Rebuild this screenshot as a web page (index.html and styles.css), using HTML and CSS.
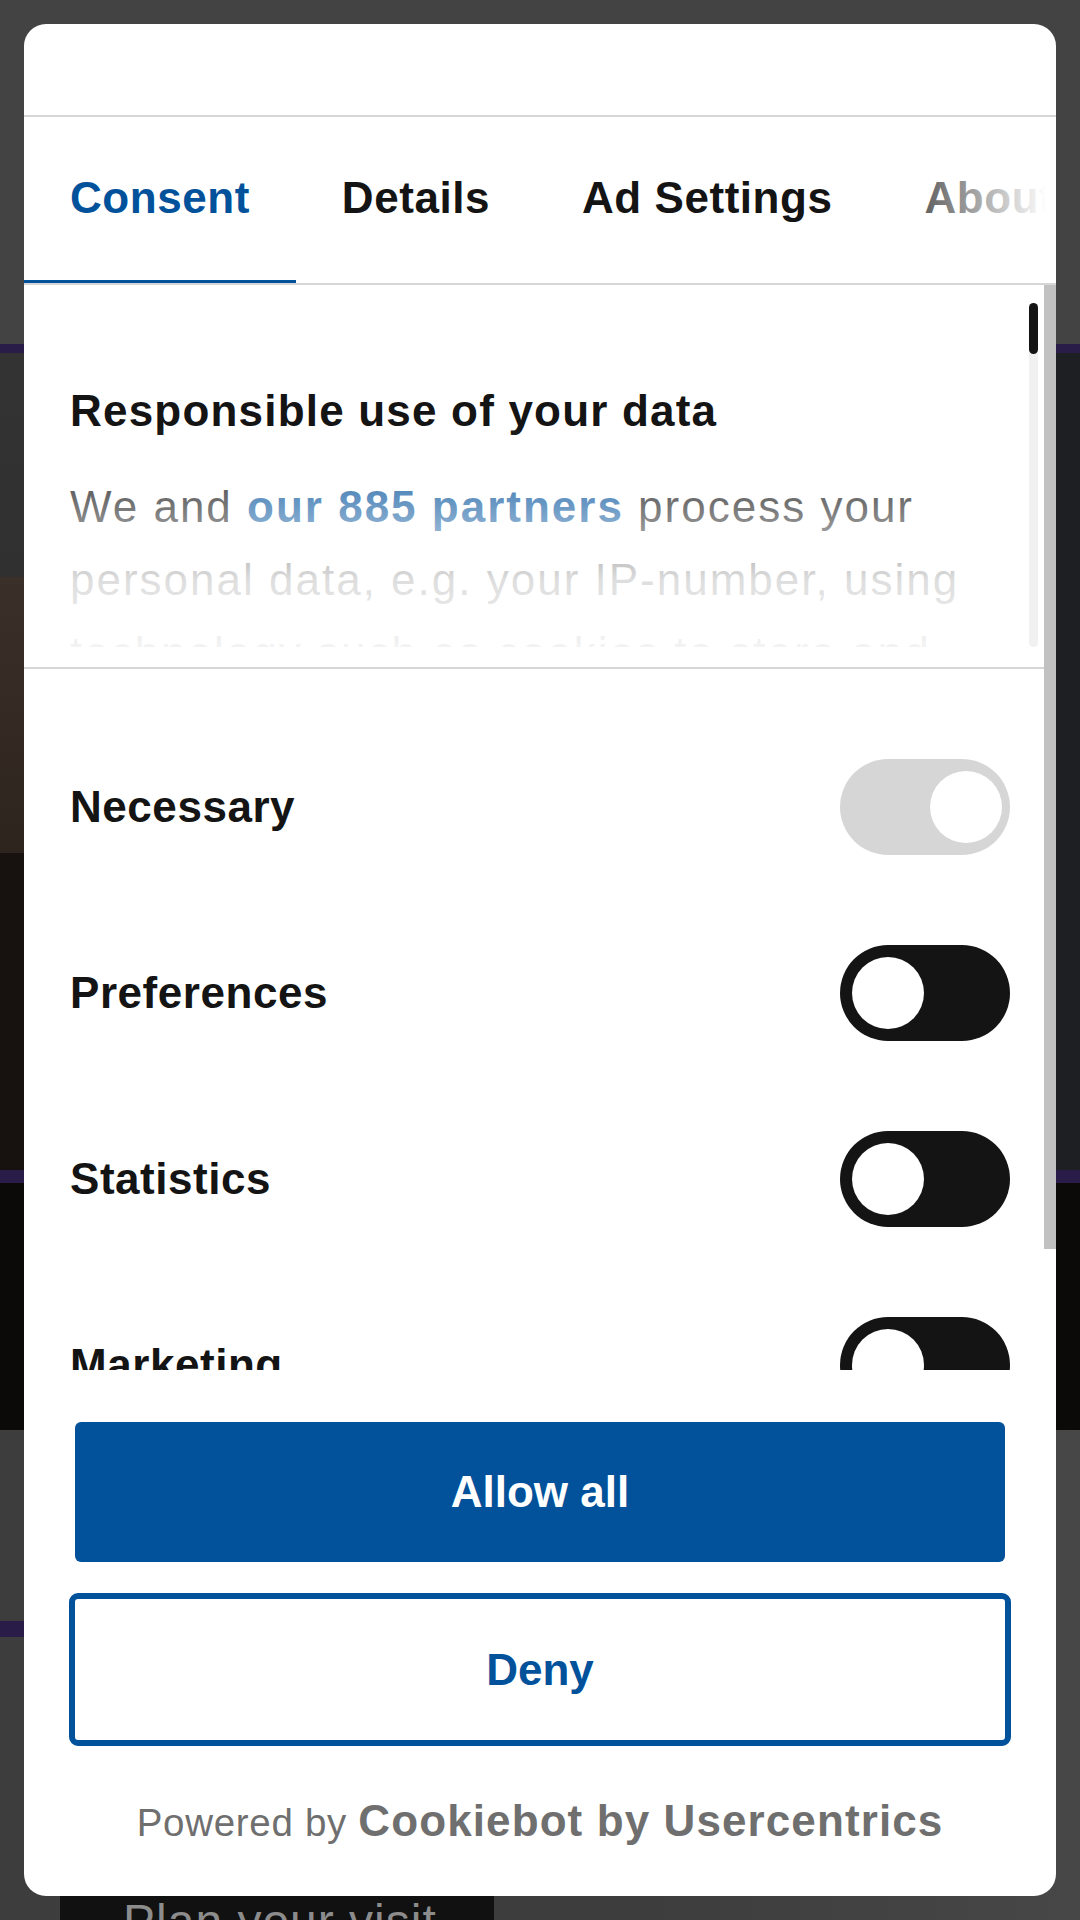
FILE: index.html
```html
<!DOCTYPE html>
<html>
<head>
    <link rel="stylesheet" href="styles.css">
</head>
<body>
    <div class="page">
        <div class="page-top"></div>
        <div class="stripe"></div>
        <div class="hero"><div class="hero-photo"></div></div>
        <div class="stripe thick"></div>
        <div class="band"></div>
        <div class="lower">
            <div class="accent"></div>
            <a class="visit">Plan your visit</a>
        </div>
    </div>

    <div class="dialog">
        <div class="dialog-header"></div>
        <nav class="tabs">
            <a class="tab active">Consent</a>
            <a class="tab">Details</a>
            <a class="tab">Ad Settings</a>
            <a class="tab">About</a>
        </nav>
        <div class="main">
            <section class="intro">
                <div class="intro-scroll">
                    <h2>Responsible use of your data</h2>
                    <p>We and <a>our 885 partners</a> process your personal data, e.g. your IP-number, using technology such as cookies to store and access information on your device.</p>
                </div>
                <div class="track"><div class="thumb"></div></div>
            </section>
            <section class="toggles">
                <div class="row"><span>Necessary</span><span class="switch on locked"></span></div>
                <div class="row"><span>Preferences</span><span class="switch"></span></div>
                <div class="row"><span>Statistics</span><span class="switch"></span></div>
                <div class="row"><span>Marketing</span><span class="switch"></span></div>
            </section>
            <div class="outer-thumb"></div>
        </div>
        <div class="footer">
            <button class="btn allow">Allow all</button>
            <button class="btn deny">Deny</button>
            <p class="powered">Powered by <b>Cookiebot by Usercentrics</b></p>
        </div>
    </div>
</body>
</html>
```

FILE: styles.css
```css
* { box-sizing: border-box; }
body { margin: 0; background-color: #434343; font-family: 'Liberation Sans', Arial, sans-serif; color: #141414; }
.page { height: 1920px; overflow: hidden; }
.page-top { height: 344px; background-color: #434343; }
.stripe { height: 9px; background-color: #2a1c48; }
.stripe.thick { height: 13px; }
.hero { height: 817px; background-color: #1e1f23; }
.hero-photo { width: 40%; height: 100%; background: linear-gradient(#333 0, #303030 224px, #3b3029 224px, #2e241e 500px, #17120f 500px); }
.band { height: 247px; background-color: #0b0a09; }
.lower { height: 490px; background: linear-gradient(90deg, #3d3d3d 60%, #474747); padding-top: 191px; }
.accent { width: 60px; height: 16px; background-color: #2a1c48; }
.visit { display: block; width: 434px; height: 120px; margin: 223px 0 0 60px; padding: 34px 0 0 63px; background-color: #111; color: #8c8c8c; font-size: 48px; letter-spacing: 1px; }

.dialog { position: absolute; top: 24px; left: 24px; width: 1032px; height: 1872px; background-color: #fff; border-radius: 22px; overflow: hidden; display: flex; flex-direction: column; }
.dialog-header { height: 93px; flex-shrink: 0; border-bottom: 2px solid #d6d6d6; }

.tabs { position: relative; display: flex; height: 168px; flex-shrink: 0; border-bottom: 2px solid #d6d6d6; overflow: hidden; }
.tabs::after { content: ''; position: absolute; top: 0; right: 0; bottom: 0; width: 192px; background: linear-gradient(90deg, rgba(255,255,255,0), #fff 95%); }
.tab { display: flex; align-items: center; flex-shrink: 0; padding: 0 46px 5px; font-size: 44px; font-weight: bold; letter-spacing: 0.55px; white-space: nowrap; color: #141414; }
.tab.active { color: #02519b; box-shadow: inset 0 -3px 0 #02519b; }

.main { position: relative; height: 1085px; flex-shrink: 0; overflow: hidden; }
.outer-thumb { position: absolute; top: -1px; right: 0; width: 12px; height: 965px; background-color: #c1c1c1; }

.intro { position: relative; height: 384px; padding-bottom: 20px; border-bottom: 2px solid #d6d6d6; }
.intro-scroll { position: relative; height: 362px; padding: 97px 46px 0; overflow: hidden; }
.intro-scroll::after { content: ''; position: absolute; left: 0; right: 0; bottom: 0; height: 220px; background: linear-gradient(rgba(255,255,255,0) 0, rgba(255,255,255,.42) 80px, rgba(255,255,255,.86) 153px, rgba(255,255,255,.95) 100%); }
.intro h2 { margin: 0 0 31px; font-size: 44px; line-height: 57px; letter-spacing: 1.2px; }
.intro p { margin: 0; font-size: 44px; line-height: 73px; letter-spacing: 2px; }
.intro p a { font-weight: bold; color: #02519b; }
.track { position: absolute; top: 18px; right: 18px; width: 9px; height: 344px; background-color: #f1f1f1; border-radius: 5px; z-index: 1; }
.thumb { height: 51px; background-color: #141414; border-radius: 5px; }

.toggles { padding: 45px 46px 0; }
.row { display: flex; justify-content: space-between; align-items: center; height: 186px; font-size: 44px; font-weight: bold; letter-spacing: 0.55px; }
.switch { position: relative; width: 170px; height: 96px; border-radius: 48px; background-color: #141414; }
.switch::after { content: ''; position: absolute; top: 12px; left: 12px; width: 72px; height: 72px; border-radius: 50%; background-color: #fff; }
.switch.on::after { left: 90px; }
.switch.locked { background-color: #d6d6d6; }

.footer { padding: 52px 45px 0; }
.btn { display: block; font-family: inherit; font-size: 44px; font-weight: bold; cursor: pointer; }
.allow { width: calc(100% - 12px); height: 140px; margin: 0 6px; border: none; border-radius: 6px; background-color: #02519b; color: #fff; }
.deny { width: 100%; height: 153px; margin-top: 31px; border: 6px solid #02519b; border-radius: 9px; background-color: #fff; color: #02519b; }
.powered { margin: 50px 0 0; text-align: center; font-size: 38.5px; line-height: 50px; letter-spacing: 0.7px; color: #6f6f6f; }
.powered b { font-size: 44px; letter-spacing: 1.1px; }
```
